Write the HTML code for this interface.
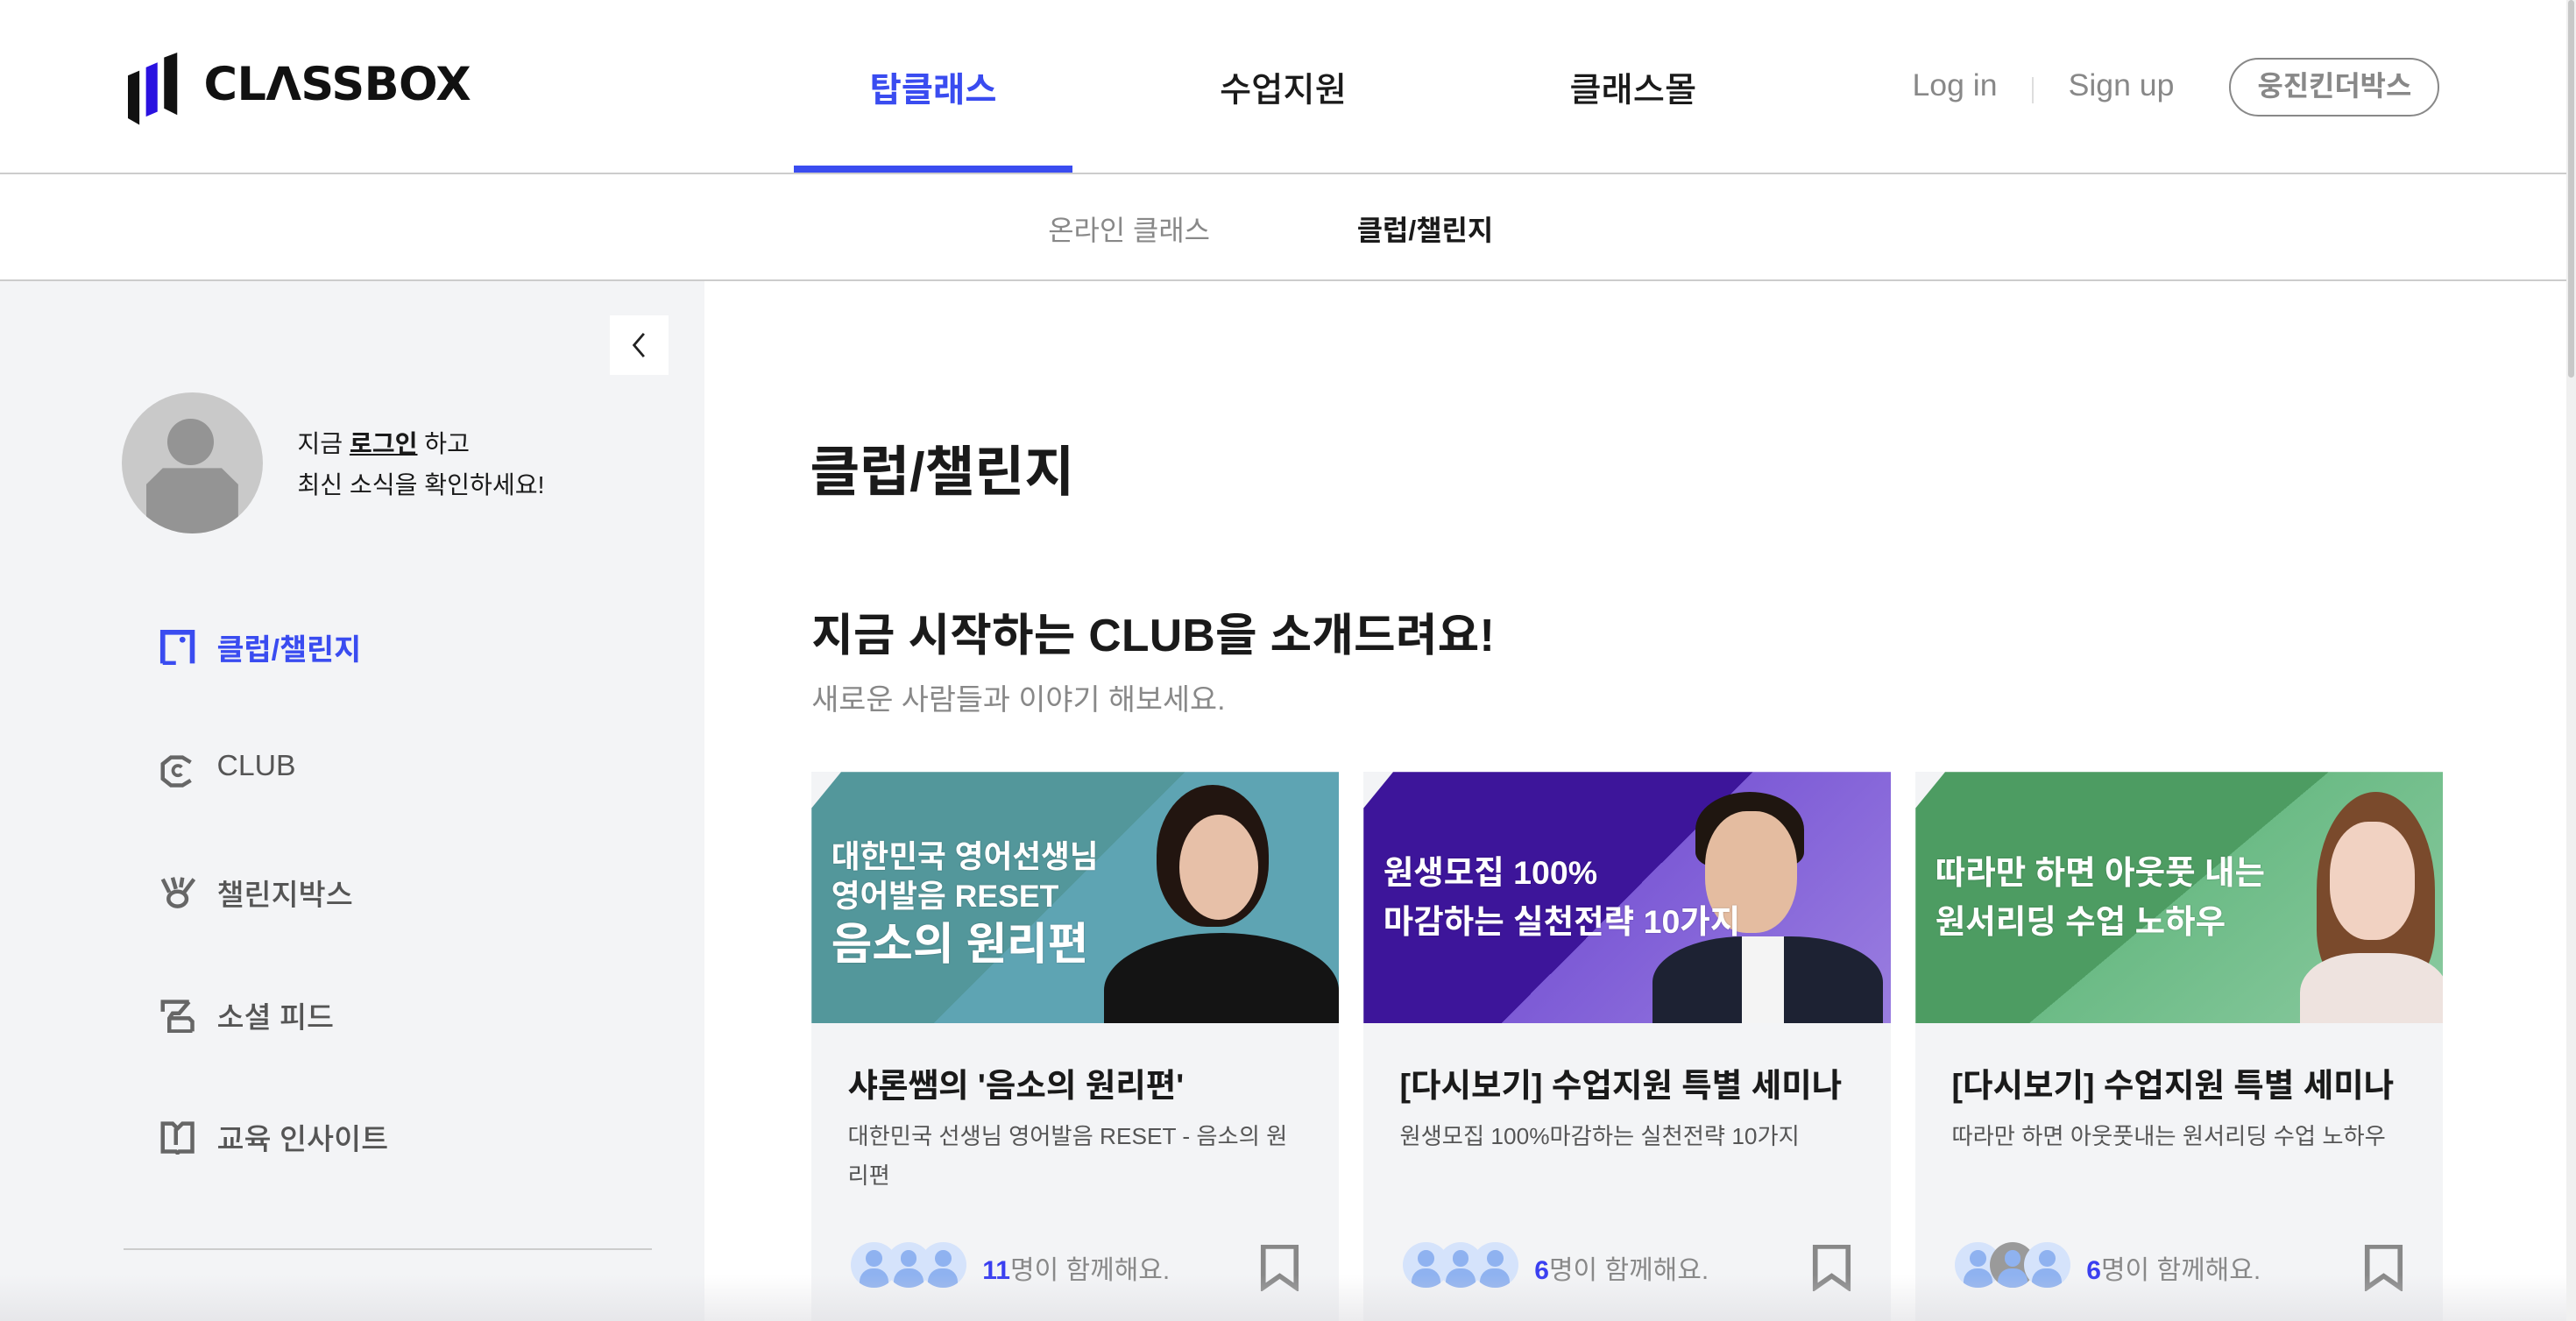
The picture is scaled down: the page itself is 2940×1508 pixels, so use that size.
<!DOCTYPE html>
<html><head><meta charset="utf-8">
<style>
*{margin:0;padding:0;box-sizing:border-box}
html,body{width:2940px;height:1508px;overflow:hidden;background:#fff}
#w{position:absolute;left:0;top:0;width:1568px;height:804px;zoom:1.875;font-family:"Liberation Sans","Noto Sans CJK KR",sans-serif;color:#1a1a1a;overflow:hidden}
.a{position:absolute;white-space:nowrap}
.nav{font-size:21px;font-weight:500;top:38px;transform:translateX(-50%)}
.card{position:absolute;top:470px;width:321px;height:340px;background:#f3f4f6;overflow:hidden}
.img{position:absolute;left:0;top:0;width:321px;height:153px;clip-path:polygon(0 22px,18px 0,100% 0,100% 100%,0 100%);overflow:hidden}
.bt{position:absolute;color:#fff;font-weight:700;line-height:1.25;text-shadow:0 0 1px rgba(0,0,0,.3)}
.ct{position:absolute;left:22px;top:174px;font-size:20px;font-weight:700;color:#1a1a1a;white-space:nowrap}
.cd{position:absolute;left:22px;top:210px;width:280px;font-size:14px;line-height:24px;color:#555}
.av{position:absolute;top:286px;width:28px;height:28px;border-radius:50%;background:#d5e3fb;overflow:hidden}
.av:before{content:"";position:absolute;left:9px;top:5px;width:10px;height:10px;border-radius:50%;background:#8fb2f0}
.av:after{content:"";position:absolute;left:5px;top:16px;width:18px;height:14px;border-radius:8px 8px 0 0;background:#8fb2f0}
.cnt{position:absolute;top:290px;font-size:16px;color:#888}
.cnt b{color:#3a3ff0}
.bm{position:absolute;left:273px;top:288px}
.mi{position:absolute;left:97px;font-size:18px;color:#555;font-weight:500}
.mi svg{position:absolute;left:0;top:2px}
.mi span{position:absolute;left:35px;top:0;white-space:nowrap}
</style></head><body><div id="w">
<!-- header -->
<svg class="a" style="left:78px;top:32px" width="32" height="44" viewBox="0 0 32 44"><polygon points="0,14 7,11 7,44 0,40" fill="#111"/><polygon points="11,9 18,6 18,36 11,39" fill="#2a12e0"/><polygon points="22,3 30,0 30,38 22,34" fill="#111"/></svg>
<div class="a" style="left:124px;top:35px;font-size:28px;font-weight:900;letter-spacing:-0.3px;color:#111;font-family:'DejaVu Sans','Liberation Sans',sans-serif">CLΛSSBOX</div>
<div class="a nav" style="left:568px;color:#3a4cf0;font-weight:700">탑클래스</div>
<div class="a nav" style="left:781px">수업지원</div>
<div class="a nav" style="left:994px">클래스몰</div>
<div class="a" style="left:483px;top:101px;width:170px;height:4px;background:#3a4cf0"></div>
<div class="a" style="left:1164px;top:41px;font-size:19px;color:#888">Log in</div>
<div class="a" style="left:1237px;top:47px;width:1px;height:16px;background:#ddd"></div>
<div class="a" style="left:1259px;top:41px;font-size:19px;color:#888">Sign up</div>
<div class="a" style="left:1357px;top:35px;width:128px;height:36px;border:1.5px solid #888;border-radius:18px;font-size:17px;font-weight:700;color:#888;text-align:center;line-height:33px">웅진킨더박스</div>
<div class="a" style="left:0;top:105px;width:1562px;height:1px;background:#ccc"></div>
<div class="a" style="left:1562px;top:0;width:6px;height:804px;background:#f0f0f0"></div>
<div class="a" style="left:1563px;top:0;width:4px;height:230px;background:#c8c8c8;border-radius:2px"></div>
<!-- subnav -->
<div class="a" style="left:638px;top:127px;font-size:17px;color:#888">온라인 클래스</div>
<div class="a" style="left:826px;top:127px;font-size:17px;font-weight:700;color:#1a1a1a">클럽/챌린지</div>
<div class="a" style="left:0;top:170px;width:1562px;height:1px;background:#ccc"></div>
<!-- sidebar -->
<div class="a" style="left:0;top:171px;width:429px;height:640px;background:#f3f4f6"></div>
<div class="a" style="left:371px;top:192px;width:36px;height:36px;background:#fff"></div>
<svg class="a" style="left:383px;top:202px" width="12" height="16" viewBox="0 0 12 16"><path d="M9 1 L3 8 L9 15" fill="none" stroke="#222" stroke-width="1.5"/></svg>
<div class="a" style="left:74px;top:239px;width:86px;height:86px;border-radius:50%;background:#c9c9c9;overflow:hidden">
<div style="position:absolute;left:28px;top:16px;width:28px;height:28px;border-radius:50%;background:#949494"></div>
<div style="position:absolute;left:15px;top:46px;width:56px;height:45px;background:#949494;clip-path:polygon(18% 0,82% 0,100% 22%,100% 100%,0 100%,0 22%)"></div></div>
<div class="a" style="left:181px;top:258px;font-size:15px;line-height:25px;color:#1a1a1a">지금 <u style="font-weight:700">로그인</u> 하고<br>최신 소식을 확인하세요!</div>
<div class="mi" style="top:381px;color:#3a4cf0;font-weight:700"><svg width="22" height="22" viewBox="0 0 22 22"><path d="M2 21 V2 H20 V21 M2 21 H10" fill="none" stroke="#3a4cf0" stroke-width="3"/><circle cx="14" cy="6.5" r="1.8" fill="#3a4cf0"/></svg><span>클럽/챌린지</span></div>
<div class="mi" style="top:456px"><svg width="22" height="22" viewBox="0 0 22 22"><path d="M19 17 L14 20 H7 L2 16 V7 L7 3 H14 L19 6" fill="none" stroke="#666" stroke-width="2.4"/><path d="M13.5 9 A3 3 0 1 0 13.5 13" fill="none" stroke="#666" stroke-width="2"/></svg><span>CLUB</span></div>
<div class="mi" style="top:530px"><svg width="22" height="22" viewBox="0 0 22 22"><path d="M2 3 L6 11 M8 2 L10 9 M21 3 L15 11 M14 2 L13 8" stroke="#666" stroke-width="2.4"/><ellipse cx="11" cy="15" rx="5.5" ry="4.5" fill="none" stroke="#666" stroke-width="2.4"/></svg><span>챌린지박스</span></div>
<div class="mi" style="top:605px"><svg width="22" height="22" viewBox="0 0 22 22"><path d="M2 9 V3 H18 M18 3 L12 10 H8 L6 13 V21 H20 M6 13 H18 L20 15 V21" fill="none" stroke="#666" stroke-width="2.4"/></svg><span>소셜 피드</span></div>
<div class="mi" style="top:679px"><svg width="22" height="22" viewBox="0 0 22 22"><path d="M2 3 H8 L11 6 L14 3 H20 V20 H12 L11 21 L10 20 H2 Z M10 6 V16" fill="none" stroke="#666" stroke-width="2.4"/></svg><span>교육 인사이트</span></div>
<div class="a" style="left:75px;top:760px;width:322px;height:1px;background:#ccc"></div>
<!-- main -->
<div class="a" style="left:493px;top:260px;font-size:33px;font-weight:700;color:#1a1a1a">클럽/챌린지</div>
<div class="a" style="left:494px;top:364px;font-size:27.5px;font-weight:700;color:#1a1a1a;letter-spacing:0.2px">지금 시작하는 CLUB을 소개드려요!</div>
<div class="a" style="left:494px;top:411px;font-size:18px;color:#888">새로운 사람들과 이야기 해보세요.</div>

<div class="card" style="left:494px">
<div class="img" style="background:linear-gradient(135deg,#53979b 0%,#53979b 48%,#5ea4b3 48%,#5ea4b3 100%)">
<div style="position:absolute;left:210px;top:8px;width:68px;height:86px;border-radius:50% 50% 45% 45%;background:#221510"></div>
<div style="position:absolute;left:224px;top:26px;width:48px;height:64px;border-radius:50%;background:#e7c0a8"></div>
<div style="position:absolute;left:178px;top:98px;width:143px;height:70px;border-radius:50% 50% 0 0;background:#141414"></div>
<div class="bt" style="left:12px;top:40px;font-size:19px">대한민국 영어선생님<br>영어발음 RESET</div>
<div class="bt" style="left:12px;top:88px;font-size:27px">음소의 원리편</div></div>
<div class="ct">샤론쌤의 '음소의 원리편'</div>
<div class="cd">대한민국 선생님 영어발음 RESET - 음소의 원리편</div>
<div class="av" style="left:24px"></div><div class="av" style="left:45px"></div><div class="av" style="left:66px"></div>
<div class="cnt" style="left:104px"><b>11</b>명이 함께해요.</div>
<svg class="bm" width="24" height="28" viewBox="0 0 24 28"><path d="M2 1 H22 V26 L12 19 L2 26 Z" fill="none" stroke="#888" stroke-width="3"/></svg>
</div>

<div class="card" style="left:830px">
<div class="img" style="background:linear-gradient(135deg,#3d159a 0%,#3d159a 50%,#7d5bd6 50%,#9a7ee0 100%)">
<div style="position:absolute;left:202px;top:12px;width:66px;height:46px;border-radius:50% 50% 20% 20%;background:#1f1610"></div>
<div style="position:absolute;left:208px;top:24px;width:56px;height:74px;border-radius:45%;background:#e4bca0"></div>
<div style="position:absolute;left:176px;top:100px;width:140px;height:70px;border-radius:40% 40% 0 0;background:#1d2233"></div>
<div style="position:absolute;left:230px;top:100px;width:26px;height:53px;background:#f4f4f4"></div>
<div class="bt" style="left:12px;top:46px;font-size:20px;line-height:30px">원생모집 100%<br>마감하는 실천전략 10가지</div></div>
<div class="ct">[다시보기] 수업지원 특별 세미나</div>
<div class="cd">원생모집 100%마감하는 실천전략 10가지</div>
<div class="av" style="left:24px"></div><div class="av" style="left:45px"></div><div class="av" style="left:66px"></div>
<div class="cnt" style="left:104px"><b>6</b>명이 함께해요.</div>
<svg class="bm" width="24" height="28" viewBox="0 0 24 28"><path d="M2 1 H22 V26 L12 19 L2 26 Z" fill="none" stroke="#888" stroke-width="3"/></svg>
</div>

<div class="card" style="left:1166px">
<div class="img" style="background:linear-gradient(140deg,#4d9c62 0%,#4d9c62 50%,#6cbb86 50%,#8bcaa0 100%)">
<div style="position:absolute;left:244px;top:12px;width:72px;height:120px;border-radius:50% 50% 30% 30%;background:#7a4a2c"></div>
<div style="position:absolute;left:252px;top:30px;width:52px;height:72px;border-radius:45%;background:#f1d2c2"></div>
<div style="position:absolute;left:234px;top:110px;width:90px;height:60px;border-radius:40% 40% 0 0;background:#eee3df"></div>
<div class="bt" style="left:12px;top:46px;font-size:20px;line-height:30px">따라만 하면 아웃풋 내는<br>원서리딩 수업 노하우</div></div>
<div class="ct">[다시보기] 수업지원 특별 세미나</div>
<div class="cd">따라만 하면 아웃풋내는 원서리딩 수업 노하우</div>
<div class="av" style="left:24px"></div><div class="av" style="left:45px;background:#9a9a9a"></div><div class="av" style="left:66px"></div>
<div class="cnt" style="left:104px"><b>6</b>명이 함께해요.</div>
<svg class="bm" width="24" height="28" viewBox="0 0 24 28"><path d="M2 1 H22 V26 L12 19 L2 26 Z" fill="none" stroke="#888" stroke-width="3"/></svg>
</div>
<div class="a" style="left:0;top:776px;width:1562px;height:28px;background:linear-gradient(to bottom,rgba(255,255,255,0),rgba(220,220,224,.55))"></div>
</div></body></html>
